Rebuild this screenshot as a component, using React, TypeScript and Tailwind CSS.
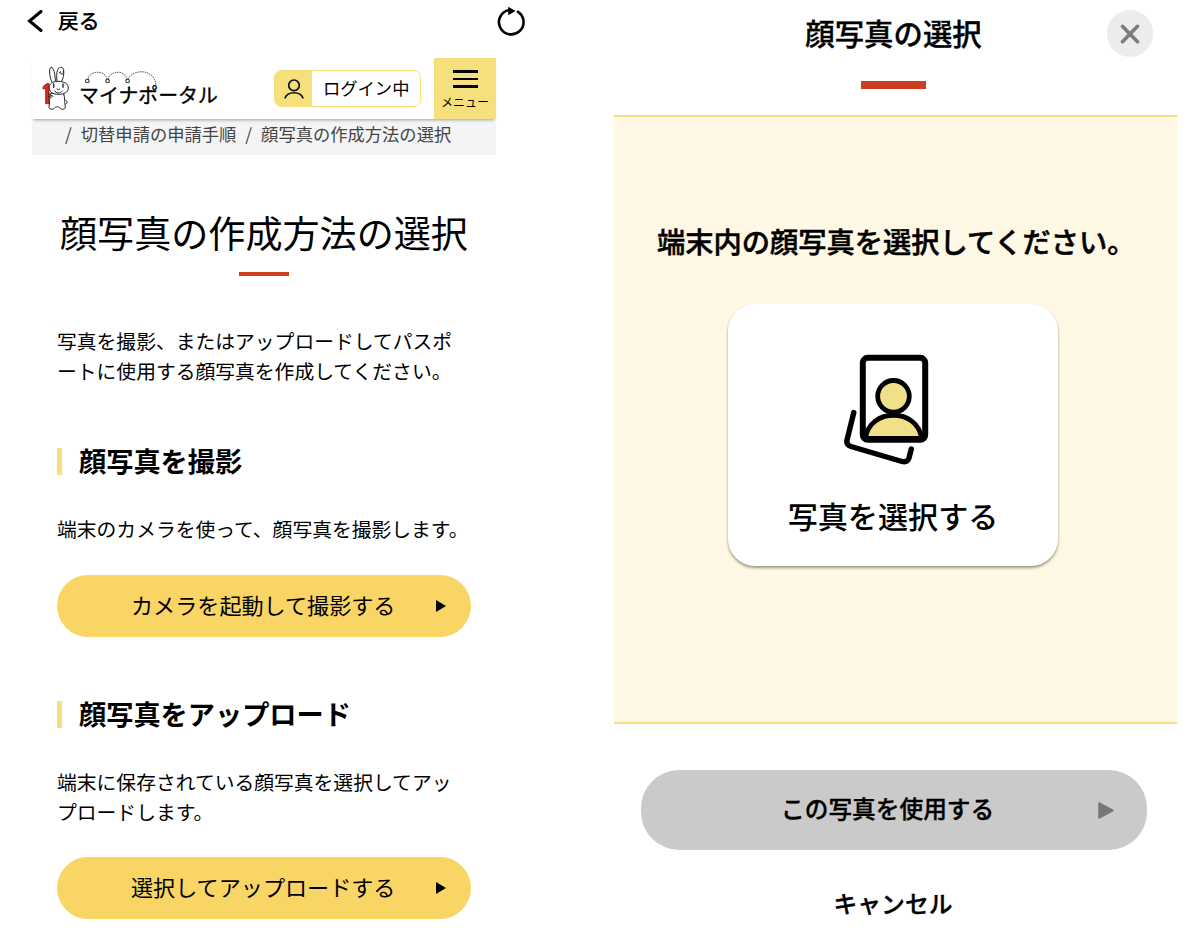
import React from "react";

function Rabbit() {
  return (
    <svg viewBox="0 0 135 165" className="-ml-px h-[55px] w-[45px] shrink-0" fill="#fff" stroke="#222" strokeWidth="3" strokeLinecap="round" strokeLinejoin="round">
      <path d="M54 67C46 50 44 24 51 22C59 20 64 44 64 63" />
      <path d="M69 63C66 45 69 25 77 23C84 20 90 25 89 32L88 39C86 44 79 43 80 38C80 32 77 35 76 39M89 33C91 43 87 56 83 64" />
      <path d="M49 101C46 113 47 130 45 142C45 149 57 149 61 145C63 139 77 139 78 145C82 149 94 149 94 142C92 130 93 113 89 101Z" />
      <path d="M94 121C101 122 102 130 95 132" />
      <path d="M45 79C49 68 61 64 74 64C91 64 103 72 103 84C103 97 90 103 73 103C57 103 43 96 45 79Z" />
      <path d="M28 79L38 71H45V131H35V84L28 87Z" fill="#e02a20" stroke="#7c1712" strokeWidth="2.4" />
      <path d="M43 101L57 109M43 109L53 112" />
      <path d="M59 72V82M87 72V82" strokeWidth="4" />
      <path d="M69 87L73 89L77 87M62 93C66 101 80 101 84 93" fill="none" />
    </svg>
  );
}

function LogoArcs() {
  return (
    <svg viewBox="80 68 80 22" className="absolute left-px top-0 h-[22px] w-[80px]" fill="none" stroke="#333">
      <path d="M88 79C90 70 105 70 107 79M108 79C111 70 125 70 127 79M128 79C133 69 154 68 156 85" strokeWidth="0.8" strokeDasharray="1.6 0.8" />
      <g fill="#fff" strokeWidth="1.1">
        <circle cx="87.3" cy="81" r="1.8" />
        <circle cx="107.6" cy="81" r="1.8" />
        <circle cx="127.6" cy="81" r="1.8" />
      </g>
    </svg>
  );
}

function Heading({ children }: { children: React.ReactNode }) {
  return (
    <h2 className="flex h-[27px] items-center border-l-[5px] border-[#f6df79] pl-[17px] text-[27.2px] leading-[27px] font-bold">
      <span className="-mt-[3px]">{children}</span>
    </h2>
  );
}

function YellowButton({ children }: { children: React.ReactNode }) {
  return (
    <button className="flex h-[62px] w-[414px] items-center rounded-full bg-[#f8d564] pl-[74px] text-[22.1px] leading-[30px]">
      <span className="-mt-[5px] w-[305px] text-left">{children}</span>
      <svg viewBox="0 0 10 12" className="h-[12px] w-[10px]">
        <path d="M0 0L10 6L0 12Z" />
      </svg>
    </button>
  );
}

function SelectionScreen() {
  return (
    <section className="flex w-[600px] shrink-0 flex-col">
      <div className="flex h-[58px] items-start justify-between pl-[27px] pr-[74px]">
        <button className="flex items-center gap-[15px] pt-[5px]">
          <svg viewBox="0 0 16 22" className="mt-[2px] h-[22px] w-[16px] shrink-0" fill="none" stroke="#000" strokeWidth="3" strokeLinecap="round">
            <path d="M14 1.5L2.5 11L14 20.5" />
          </svg>
          <span className="text-[20.8px] leading-[30px] font-medium [-webkit-text-stroke:0.2px_#000]">戻る</span>
        </button>
        <svg viewBox="0 0 30 32" className="mt-[5px] h-[32px] w-[30px]" fill="none" stroke="#000" strokeWidth="2.6">
          <path d="M13 5A12.3 12.3 0 1 0 22 6.8" strokeLinecap="round" />
          <path d="M12.2 1.8L19.6 6L12.2 10.2Z" fill="#000" stroke="none" />
        </svg>
      </div>

      <div className="ml-[32px] w-[464px]">
        <header className="relative flex h-[61px] bg-white pl-[3px] shadow-[0_3px_3px_-2px_rgba(0,0,0,0.35)]">
          <div className="flex w-[239px] pt-[2px]">
            <Rabbit />
            <div className="relative mt-[8px] pt-[12px]">
              <LogoArcs />
              <span className="relative text-[19.9px] leading-[30px] [-webkit-text-stroke:0.35px_#000]">マイナポータル</span>
            </div>
          </div>
          <div className="mt-[12px] flex h-[37px] w-[147px] items-center overflow-hidden rounded-[7px] border border-[#f6df79] bg-white">
            <div className="flex h-full w-[37px] items-center justify-center bg-[#f6e07d]">
              <svg viewBox="0 0 20 20" className="h-[20px] w-[20px]" fill="none" stroke="#111" strokeWidth="1.7">
                <circle cx="10" cy="6.3" r="5.3" />
                <path d="M.8 19.5C3.5 11.8 16.5 11.8 19.2 19.5" />
              </svg>
            </div>
            <span className="-mt-px pl-[11px] text-[17.3px] leading-[30px]">ログイン中</span>
          </div>
          <button className="ml-[13px] flex h-[61px] w-[62px] flex-col items-center bg-[#f6e07d] pt-[12px]">
            <span className="flex w-[25px] flex-col gap-[5px]">
              <i className="h-[2.5px] bg-black" />
              <i className="h-[2.5px] bg-black" />
              <i className="h-[2.5px] bg-black" />
            </span>
            <span className="mt-[6px] text-[12px] leading-[16px] whitespace-nowrap">メニュー</span>
          </button>
        </header>
        <nav className="flex h-[36px] gap-[9px] bg-[#f4f4f4] pl-[33px] text-[17.3px] leading-[29px] whitespace-nowrap text-[#444]">
          <span>/</span>
          <span>切替申請の申請手順</span>
          <span>/</span>
          <span>顔写真の作成方法の選択</span>
        </nav>

        <div className="pl-[25px] whitespace-nowrap">
          <h1 className="mt-[52px] pl-[3px] text-[37.1px] leading-[50px] font-normal">顔写真の作成方法の選択</h1>
          <div className="mt-[15px] ml-[182px] h-[4px] w-[50px] bg-[#cb3e1f]" />
          <p className="mt-[50px] h-[60px] text-[19.8px] leading-[29.7px]">
            写真を撮影、またはアップロードしてパスポ
            <br />
            ートに使用する顔写真を作成してください。
          </p>
          <div className="mt-[62px]">
            <Heading>顔写真を撮影</Heading>
          </div>
          <p className="mt-[39px] h-[30px] text-[19.8px] leading-[30px]">端末のカメラを使って、顔写真を撮影します。</p>
          <div className="mt-[31px]">
            <YellowButton>カメラを起動して撮影する</YellowButton>
          </div>
          <div className="mt-[64px]">
            <Heading>顔写真をアップロード</Heading>
          </div>
          <p className="mt-[39px] h-[60px] text-[19.8px] leading-[29.7px]">
            端末に保存されている顔写真を選択してアッ
            <br />
            プロードします。
          </p>
          <div className="mt-[30px]">
            <YellowButton>選択してアップロードする</YellowButton>
          </div>
        </div>
      </div>
    </section>
  );
}

function PhotoIcon() {
  return (
    <svg viewBox="843 353 87 113" className="h-[113px] w-[87px]" fill="none" stroke="#000" strokeLinecap="round" strokeLinejoin="round">
      <path d="M865.5 438.5C869 407.5 918 407.5 921.5 438.5Z" fill="#f1e08a" strokeWidth="4.8" />
      <circle cx="893.5" cy="396.3" r="15.8" fill="#f1e08a" strokeWidth="4.8" />
      <rect x="862.8" y="357.8" width="62.4" height="82" rx="5" strokeWidth="6" />
      <path d="M853.8 412.5L847 440C846.2 443.5 848 445.5 851 446.5L902 461.5C906 462.5 908 461 909 458L911.3 449" strokeWidth="5.4" />
    </svg>
  );
}

function PickerScreen() {
  return (
    <section className="flex w-[600px] shrink-0 flex-col pl-[14px] pr-[23px]">
      <div className="flex h-[115px] items-start">
        <div className="flex w-[493px] flex-col items-center pl-[66px] pt-[12px]">
          <h1 className="text-[29.4px] leading-[40px] font-medium whitespace-nowrap [-webkit-text-stroke:0.35px_#000]">顔写真の選択</h1>
          <div className="mt-[29px] h-[8px] w-[65px] bg-[#cb3e1f]" />
        </div>
        <button className="mt-[10px] flex h-[47px] w-[46px] items-center justify-center rounded-full bg-[#ececec]">
          <svg viewBox="0 0 20 20" className="h-[20px] w-[20px]" stroke="#7c7c80" strokeWidth="3.6" strokeLinecap="round">
            <path d="M2.5 2.3L17.5 17.7M17.5 2.3L2.5 17.7" />
          </svg>
        </button>
      </div>
      <div className="flex h-[609px] flex-col border-y-2 border-[#f3df82] bg-[#fef8e5]">
        <p className="mt-[103px] pl-[43px] text-[28.25px] leading-[42px] font-medium whitespace-nowrap [-webkit-text-stroke:0.5px_#000]">
          端末内の顔写真を選択してください。
        </p>
        <button className="mt-[42px] ml-[114px] flex h-[262px] w-[330px] flex-col items-center rounded-[27px] bg-white pt-[49px] shadow-[0_2px_3px_rgba(80,75,50,0.55)]">
          <span className="mr-[13px]">
            <PhotoIcon />
          </span>
          <span className="mt-[29px] text-[30.1px] leading-[40px] font-medium">写真を選択する</span>
        </button>
      </div>
      <button className="mt-[46px] ml-[27px] flex h-[80px] w-[506px] items-center rounded-[38px] bg-[#cacaca] pl-[140px] font-medium">
        <span className="-mt-[4px] w-[317px] text-left text-[23.7px] leading-[34px] [-webkit-text-stroke:0.35px_#000]">この写真を使用する</span>
        <svg viewBox="0 0 16 17" className="mt-px h-[17px] w-[16px]" fill="#777" stroke="#777" strokeWidth="1.5" strokeLinejoin="round">
          <path d="M1 1L15 8.5L1 16Z" />
        </svg>
      </button>
      <button className="mt-[36px] pr-[5px] text-center text-[23.8px] leading-[34px] font-medium [-webkit-text-stroke:0.35px_#000]">キャンセル</button>
    </section>
  );
}

export default function App() {
  return (
    <main lang="ja" className="flex h-[938px] w-[1200px] overflow-hidden bg-white font-['Noto_Sans_CJK_JP',sans-serif] text-black">
      <SelectionScreen />
      <PickerScreen />
    </main>
  );
}
